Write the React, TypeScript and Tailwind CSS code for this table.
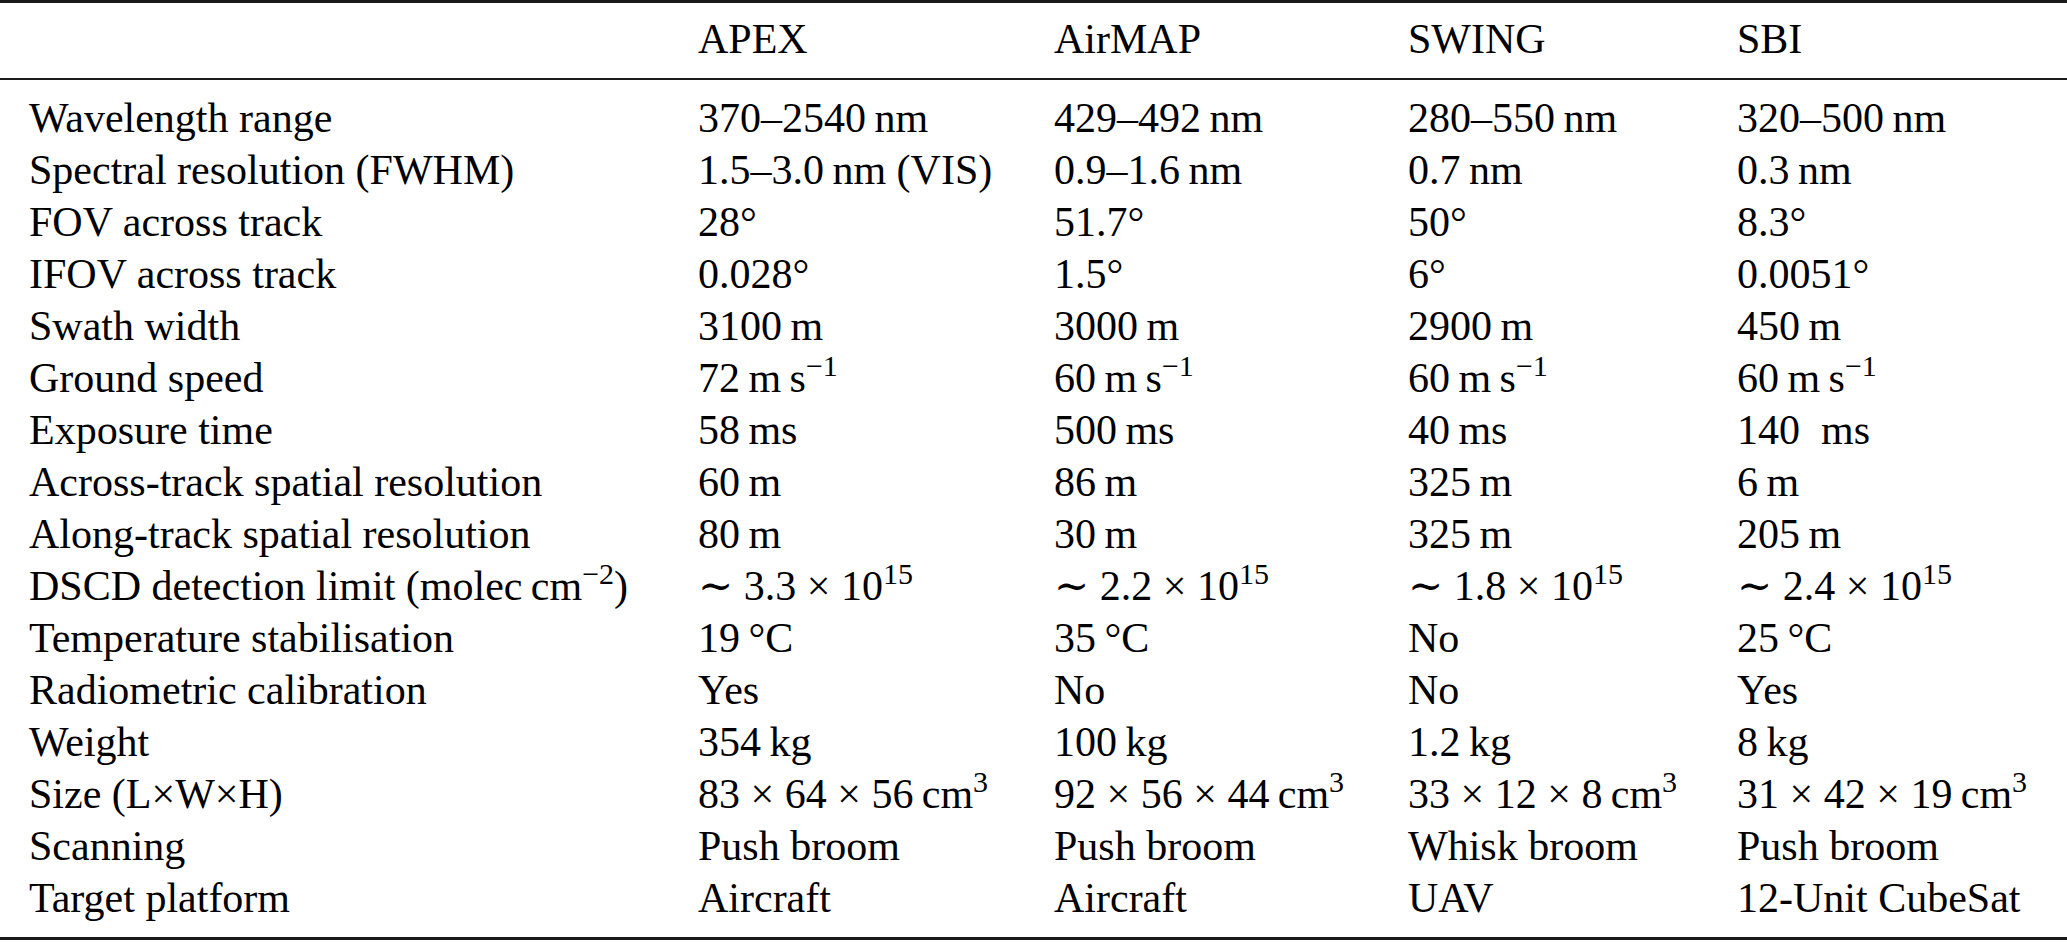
import React from "react";

const th = "\u2009";
const mid = "\u2005";

// superscript, raised like TeX math mode
function Sup({ children }: { children: React.ReactNode }) {
  return <span className="relative top-[-0.52em] text-[30px] leading-none">{children}</span>;
}

const speed = (v: string) => (
  <>
    {v}
    {th}m{th}s
    <Sup>−1</Sup>
  </>
);

const dscd = (v: string) => (
  <>
    ∼{mid}
    {v}
    {mid}×{mid}10
    <Sup>15</Sup>
  </>
);

const size = (a: string, b: string, c: string) => (
  <>
    {a}
    {mid}×{mid}
    {b}
    {mid}×{mid}
    {c}
    {th}cm
    <Sup>3</Sup>
  </>
);

type Row = [React.ReactNode, React.ReactNode, React.ReactNode, React.ReactNode, React.ReactNode];

const rows: Row[] = [
  ["Wavelength range", `370–2540${th}nm`, `429–492${th}nm`, `280–550${th}nm`, `320–500${th}nm`],
  ["Spectral resolution (FWHM)", `1.5–3.0${th}nm (VIS)`, `0.9–1.6${th}nm`, `0.7${th}nm`, `0.3${th}nm`],
  ["FOV across track", "28°", "51.7°", "50°", "8.3°"],
  ["IFOV across track", "0.028°", "1.5°", "6°", "0.0051°"],
  ["Swath width", `3100${th}m`, `3000${th}m`, `2900${th}m`, `450${th}m`],
  ["Ground speed", speed("72"), speed("60"), speed("60"), speed("60")],
  ["Exposure time", `58${th}ms`, `500${th}ms`, `40${th}ms`, "140  ms"],
  ["Across-track spatial resolution", `60${th}m`, `86${th}m`, `325${th}m`, `6${th}m`],
  ["Along-track spatial resolution", `80${th}m`, `30${th}m`, `325${th}m`, `205${th}m`],
  [
    <>
      DSCD detection limit (molec{th}cm
      <Sup>−2</Sup>)
    </>,
    dscd("3.3"),
    dscd("2.2"),
    dscd("1.8"),
    dscd("2.4"),
  ],
  ["Temperature stabilisation", `19${th}°C`, `35${th}°C`, "No", `25${th}°C`],
  ["Radiometric calibration", "Yes", "No", "No", "Yes"],
  ["Weight", `354${th}kg`, `100${th}kg`, `1.2${th}kg`, `8${th}kg`],
  ["Size (L×W×H)", size("83", "64", "56"), size("92", "56", "44"), size("33", "12", "8"), size("31", "42", "19")],
  ["Scanning", "Push broom", "Push broom", "Whisk broom", "Push broom"],
  ["Target platform", "Aircraft", "Aircraft", "UAV", "12-Unit CubeSat"],
];

const cols = "grid grid-cols-[698px_356px_354px_329px_1fr]";

export default function App() {
  return (
    <div
      className="h-[942px] w-[2067px] bg-white text-[42px] text-black"
      style={{ fontFamily: '"Liberation Serif", "DejaVu Serif", serif' }}
    >
      <div className="border-t-[3px] border-b-[3px] border-[#1a1a1a]">
        {/* header */}
        <div className={`${cols} h-[77px] items-center border-b-2 border-[#1a1a1a] pb-[2px]`}>
          <div />
          <div>APEX</div>
          <div>AirMAP</div>
          <div>SWING</div>
          <div>SBI</div>
        </div>

        {/* body */}
        <div className="pb-[13px] pt-[12px]">
          {rows.map((r, i) => (
            <div key={i} className={`${cols} h-[52px] items-center whitespace-pre leading-[52px]`}>
              <div className="pl-[29px]">{r[0]}</div>
              <div>{r[1]}</div>
              <div>{r[2]}</div>
              <div>{r[3]}</div>
              <div>{r[4]}</div>
            </div>
          ))}
        </div>
      </div>
    </div>
  );
}
